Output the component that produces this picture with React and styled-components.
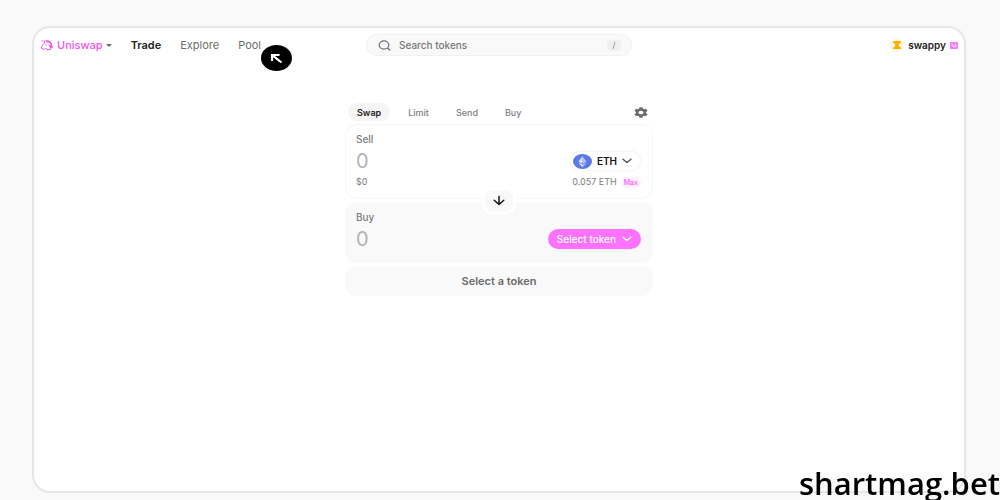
import styled, { createGlobalStyle } from "styled-components";

function UnicornLogo() {
  return (
    <svg width="14" height="12" viewBox="0 0 28 24" fill="none" aria-hidden="true">
      <path d="M3 2l5 5M8 2l2 4" stroke="#f050ee" strokeWidth="1.6" />
      <path d="M11 3c6-2 12 2 13 8 0 3 2 4 2 7l-3-1c0 3-1 4-3 5 1-4 0-6-2-8" fill="#f050ee" />
      <path d="M10 6C7 10 4 13 2 18c2 3 6 3 9 1 3 3 7 3 10 2" stroke="#f050ee" strokeWidth="2" />
      <path d="M12 7c3 1 4 3 6 6l3-2c-2-4-5-5-9-4z" fill="#fff" />
      <circle cx="12" cy="12" r="1.4" fill="#f050ee" />
    </svg>
  );
}

function Chevron() {
  return (
    <svg width="10" height="6" viewBox="0 0 10 6" fill="none" aria-hidden="true">
      <path
        d="M1 1.2l4 3.4 4-3.4"
        stroke="currentColor"
        strokeWidth="1.3"
        strokeLinecap="round"
        strokeLinejoin="round"
      />
    </svg>
  );
}

function SearchIcon() {
  return (
    <svg width="13" height="11" viewBox="0 0 13 11" fill="none" stroke="#6f6f6f" aria-hidden="true">
      <ellipse cx="6" cy="5" rx="4.9" ry="4.1" strokeWidth="1.2" />
      <path d="M9.5 8l2.3 2" strokeWidth="1.2" strokeLinecap="round" />
    </svg>
  );
}

function CursorArrow() {
  return (
    <svg width="13" height="11" viewBox="0 0 13 11" fill="none" stroke="#fff" aria-hidden="true">
      <path d="M2 8V2h7.500M2.500 2.300l9 7.200" strokeWidth="2.200" />
    </svg>
  );
}

function Hourglass() {
  return (
    <svg width="14" height="14" viewBox="0 0 14 14" aria-hidden="true">
      <circle cx="7" cy="7" r="7" fill="#fff9e3" />
      <path
        d="M3 3h8v1.500h-.8C10 5.800 9 6.500 8.200 7c.8.500 1.800 1.200 2 2.500h.8V11H3V9.500h.8C4 8.200 5 7.500 5.800 7 5 6.500 4 5.800 3.800 4.500H3z"
        fill="#ffb000"
      />
    </svg>
  );
}

function NameBadge() {
  return (
    <svg width="8" height="7" viewBox="0 0 8 7" aria-hidden="true">
      <rect width="8" height="7" rx="1" fill="#f77af7" />
      <path d="M2 1.500v2.300h2.200M5.800 1.500v3.200H3.200" fill="none" stroke="#fff" strokeWidth=".8" />
    </svg>
  );
}

function GearIcon() {
  return (
    <svg width="14" height="11" viewBox="2 2 20 20" preserveAspectRatio="none" aria-hidden="true">
      <path
        d="M19.140 12.940c.040-.300.060-.610.060-.940s-.020-.640-.070-.940l2.030-1.580a.49.49 0 0 0 .120-.610l-1.920-3.320a.49.49 0 0 0-.590-.220l-2.390.96a7 7 0 0 0-1.620-.94l-.360-2.540A.48.48 0 0 0 13.920 2.400h-3.840a.48.48 0 0 0-.47.410l-.36 2.540a7.300 7.300 0 0 0-1.620.94l-2.390-.96a.48.48 0 0 0-.59.220L2.740 8.870a.48.48 0 0 0 .120.610l2.030 1.580a6 6 0 0 0 0 1.880l-2.030 1.580a.49.49 0 0 0-.120.610l1.920 3.320c.120.220.370.290.590.220l2.390-.96a7 7 0 0 0 1.620.94l.36 2.540c.05.240.240.410.48.410h3.840c.240 0 .440-.170.470-.410l.36-2.540a7 7 0 0 0 1.620-.94l2.390.96c.220.080.470 0 .590-.220l1.920-3.320a.48.48 0 0 0-.120-.610zM12 15.400A3.400 3.400 0 1 1 12 8.600a3.400 3.400 0 0 1 0 6.800z"
        fill="#6c6c6c"
      />
    </svg>
  );
}

function EthIcon() {
  return (
    <svg width="19" height="15" viewBox="0 0 19 15" aria-hidden="true">
      <ellipse cx="9.500" cy="7.500" rx="9.500" ry="7.500" fill="#5a78e6" />
      <path d="M9.500 2L5.500 7.700l4 2z" fill="#dfe6ff" />
      <path d="M9.500 2l4 5.700-4 2z" fill="#b3c2f8" />
      <path d="M5.500 8.700l4 2v2.500z" fill="#fff" />
      <path d="M13.500 8.700l-4 2v2.500z" fill="#c8d3fb" />
    </svg>
  );
}

function DownArrow() {
  return (
    <svg width="12" height="10" viewBox="0 0 12 10" fill="none" stroke="#131313" aria-hidden="true">
      <path d="M6 .8v8M1.200 4.800L6 9l4.800-4.200" strokeWidth="1.500" strokeLinecap="round" strokeLinejoin="round" />
    </svg>
  );
}

function App() {
  return (
    <>
      <GlobalStyle />
      <Page>
        <Frame>
          <Header>
            <Nav>
              <Brand type="button">
                <UnicornLogo />
                Uniswap
                <Caret />
              </Brand>
              <NavLink href="#trade" $active>
                Trade
              </NavLink>
              <NavLink href="#explore">Explore</NavLink>
              <NavLink href="#pool">
                Pool
                <Pointer>
                  <CursorArrow />
                </Pointer>
              </NavLink>
            </Nav>
            <Search>
              <SearchIcon />
              <input type="text" placeholder="Search tokens" aria-label="Search tokens" />
              <kbd>/</kbd>
            </Search>
            <Account type="button">
              <Hourglass />
              <span>swappy</span>
              <NameBadge />
            </Account>
          </Header>
          <Widget>
            <Tabs>
              <Tab type="button" $active>
                Swap
              </Tab>
              <Tab type="button">Limit</Tab>
              <Tab type="button">Send</Tab>
              <Tab type="button">Buy</Tab>
              <Settings type="button" aria-label="Settings">
                <GearIcon />
              </Settings>
            </Tabs>
            <Card>
              <Label htmlFor="sell">Sell</Label>
              <Row>
                <Amount id="sell" type="text" placeholder="0" />
                <TokenButton type="button">
                  <EthIcon />
                  ETH
                  <Chevron />
                </TokenButton>
              </Row>
              <Balance>
                <span>$0</span>
                <span>0.057 ETH</span>
                <MaxButton type="button">Max</MaxButton>
              </Balance>
            </Card>
            <Divider>
              <SwitchButton type="button" aria-label="Switch tokens">
                <DownArrow />
              </SwitchButton>
            </Divider>
            <Card $filled>
              <Label htmlFor="buy">Buy</Label>
              <Row>
                <Amount id="buy" type="text" placeholder="0" />
                <SelectButton type="button">
                  Select token
                  <Chevron />
                </SelectButton>
              </Row>
            </Card>
            <Submit type="button">Select a token</Submit>
          </Widget>
        </Frame>
        <Watermark>shartmag.bet</Watermark>
      </Page>
    </>
  );
}

const GlobalStyle = createGlobalStyle`
  * {
    box-sizing: border-box;
  }
  body {
    margin: 0;
    background: #f9f9f9;
    font-family: Inter, "Liberation Sans", sans-serif;
    color: #131313;
  }
  button, input, kbd {
    font-family: inherit;
  }
  button {
    border: none;
    padding: 0;
    background: none;
    cursor: pointer;
  }
  svg {
    display: block;
    flex-shrink: 0;
  }
`;

const Page = styled.div`
  display: flex;
  min-height: 100vh;
  padding: 26px 34px 7px 32px;
`;

const Frame = styled.div`
  flex: 1;
  background: #ffffff;
  border: 2px solid #e6e6e6;
  border-radius: 18px;
`;

const Header = styled.header`
  display: grid;
  grid-template-columns: 1fr minmax(120px, 266px) 1fr;
  align-items: center;
  height: 34px;
  padding: 0 6px;
`;

const Nav = styled.nav`
  display: flex;
  align-items: center;
  gap: 19px;
`;

const Brand = styled.button`
  display: flex;
  align-items: center;
  gap: 3px;
  color: #ee55ec;
  font-size: 11px;
  font-weight: 500;
`;

const Caret = styled.span`
  border: 3px solid transparent;
  border-top: 3px solid #6c6c6c;
  border-bottom: none;
`;

const NavLink = styled.a`
  position: relative;
  font-size: 11px;
  font-weight: ${({ $active }) => ($active ? 600 : 400)};
  color: ${({ $active }) => ($active ? "#222222" : "#6c6c6c")};
  text-decoration: none;
`;

const Pointer = styled.span`
  position: absolute;
  top: 7px;
  left: 23px;
  display: flex;
  align-items: center;
  justify-content: center;
  width: 31px;
  height: 26px;
  border-radius: 50%;
  background: #000000;
`;

const Search = styled.div`
  display: flex;
  align-items: center;
  gap: 8px;
  height: 22px;
  padding: 0 10px 0 11px;
  background: #f9f9f9;
  border: 1px solid #f1f1f1;
  border-radius: 11px;
  input {
    flex: 1;
    min-width: 0;
    padding: 0;
    border: none;
    outline: none;
    background: none;
    font-size: 10px;
    font-weight: 500;
    &::placeholder {
      color: #777777;
      opacity: 1;
    }
  }
  kbd {
    width: 14px;
    border-radius: 3px;
    background: #efefef;
    color: #7d7d7d;
    font-size: 8px;
    line-height: 11px;
    text-align: center;
  }
`;

const Account = styled.button`
  display: flex;
  align-items: center;
  justify-self: end;
  gap: 4px;
  font-size: 10px;
  font-weight: 600;
  color: #222222;
`;

const Widget = styled.main`
  max-width: 308px;
  margin: 41px auto 0;
`;

const Tabs = styled.div`
  display: flex;
  align-items: center;
  gap: 9px;
  margin-bottom: 3px;
  padding: 0 5px 0 3px;
`;

const Tab = styled.button`
  height: 18px;
  padding: 0 9px;
  border-radius: 9px;
  background: ${({ $active }) => ($active ? "#f5f5f5" : "none")};
  color: ${({ $active }) => ($active ? "#222222" : "#7d7d7d")};
  font-size: 9px;
  font-weight: ${({ $active }) => ($active ? 600 : 500)};
`;

const Settings = styled.button`
  margin-left: auto;
`;

const Card = styled.section`
  padding: 8px 11px ${({ $filled }) => ($filled ? "13px" : "10px")} 10px;
  border: 1px solid ${({ $filled }) => ($filled ? "#f9f9f9" : "#f6f6f6")};
  border-radius: 12px;
  background: ${({ $filled }) => ($filled ? "#f9f9f9" : "#ffffff")};
`;

const Label = styled.label`
  display: block;
  font-size: 10px;
  font-weight: 500;
  line-height: 12px;
  color: #7d7d7d;
`;

const Row = styled.div`
  display: flex;
  align-items: center;
  justify-content: space-between;
  height: 20px;
  margin: 6px 0 5px;
  ${Card}:last-of-type & {
    margin-bottom: 0;
  }
`;

const Amount = styled.input`
  flex: 1;
  min-width: 0;
  height: 20px;
  padding: 0;
  border: none;
  outline: none;
  background: none;
  font-size: 20px;
  &::placeholder {
    color: #b4b4b4;
    opacity: 1;
  }
`;

const TokenButton = styled.button`
  display: flex;
  align-items: center;
  gap: 5px;
  height: 20px;
  padding: 0 8px 0 2px;
  border: 1px solid #f6f6f6;
  border-radius: 10px;
  background: #ffffff;
  box-shadow: 0 0 3px rgba(0, 0, 0, 0.04);
  color: #131313;
  font-size: 10px;
  font-weight: 600;
  svg:last-child {
    color: #4d4d4d;
  }
`;

const Balance = styled.div`
  display: flex;
  align-items: center;
  gap: 4px;
  font-size: 9px;
  font-weight: 400;
  line-height: 12px;
  color: #7d7d7d;
  span:first-child {
    flex: 1;
  }
`;

const MaxButton = styled.button`
  height: 11px;
  padding: 0 3px;
  border-radius: 6px;
  background: #fff0ff;
  color: #f95df6;
  font-size: 7px;
  font-weight: 500;
`;

const Divider = styled.div`
  position: relative;
  height: 3px;
`;

const SwitchButton = styled.button`
  position: absolute;
  top: 50%;
  left: 50%;
  transform: translate(-50%, -50%);
  display: flex;
  align-items: center;
  justify-content: center;
  width: 34px;
  height: 27px;
  border: 3px solid #ffffff;
  border-radius: 10px;
  background: #f9f9f9;
`;

const SelectButton = styled.button`
  display: flex;
  align-items: center;
  gap: 6px;
  height: 20px;
  padding: 0 9px;
  border-radius: 10px;
  background: #fc72ff;
  color: #ffffff;
  font-size: 10px;
  font-weight: 500;
`;

const Submit = styled.button`
  display: block;
  width: 100%;
  height: 30px;
  margin-top: 3px;
  border-radius: 12px;
  background: #f9f9f9;
  color: #6c6c6c;
  font-size: 11px;
  font-weight: 600;
`;

const Watermark = styled.div`
  position: fixed;
  right: 0;
  bottom: 0;
  color: #000000;
  font-family: "Open Sans", "Noto Sans", sans-serif;
  font-size: 31px;
  font-weight: 600;
  line-height: 34px;
`;

export default App;
